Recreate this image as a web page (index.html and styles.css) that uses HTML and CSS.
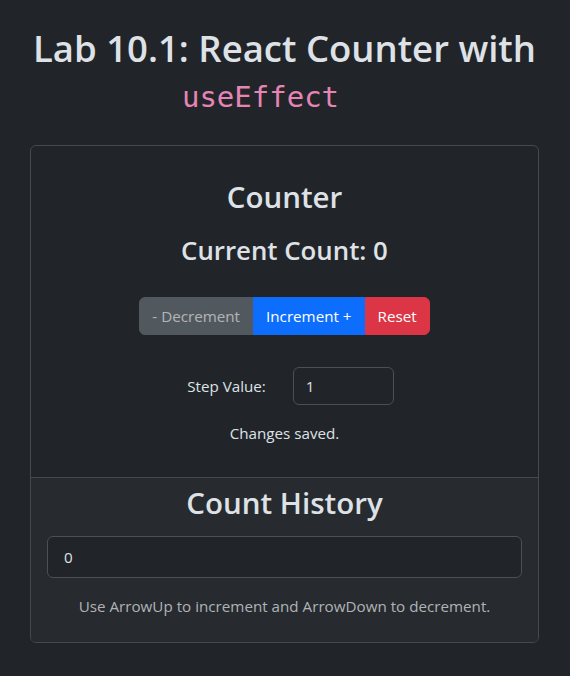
FILE: index.html
```html
<!DOCTYPE html>
<html lang="en">
<head>
<meta charset="utf-8">
<title>Lab 10.1</title>
<link rel="stylesheet" href="styles.css">
</head>
<body>
<div class="container">
  <h1 class="title">Lab 10.1: React Counter with <code class="code">useEffect</code></h1>
  <div class="card">
    <div class="card-body">
      <h2 class="heading">Counter</h2>
      <h3 class="count">Current Count: 0</h3>
      <div class="btn-group">
        <button class="btn btn-secondary" disabled>- Decrement</button>
        <button class="btn btn-primary">Increment +</button>
        <button class="btn btn-danger">Reset</button>
      </div>
      <div class="step-row">
        <label class="step-label" for="step">Step Value:</label>
        <input class="step-input" id="step" type="number" value="1">
      </div>
      <p class="saved">Changes saved.</p>
    </div>
    <div class="card-footer">
      <h2 class="heading heading-footer">Count History</h2>
      <div class="history">0</div>
      <p class="hint">Use ArrowUp to increment and ArrowDown to decrement.</p>
    </div>
  </div>
</div>
</body>
</html>
```

FILE: styles.css
```css
* { box-sizing: border-box; }
html, body { margin: 0; padding: 0; }
body {
  background: #212529;
  color: #dee2e6;
  font-family: "Open Sans", "Noto Sans", sans-serif;
  font-size: 15.2px;
  line-height: 24px;
}
.container {
  padding: 24px 31px 24px 30px;
}
.title {
  margin: 0 0 24px;
  font-size: 36.5px;
  font-weight: 600;
  line-height: 48px;
  text-align: center;
}
.code {
  display: inline-block;
  margin-right: 48px;
  font-family: "DejaVu Sans Mono", "Liberation Mono", monospace;
  font-size: 29px;
  font-weight: 400;
  line-height: 48px;
  vertical-align: top;
  padding-top: 1px;
  color: #e685b5;
}
.card {
  border: 1px solid #45494e;
  border-radius: 6px;
  overflow: hidden;
  text-align: center;
}
.card-body {
  padding: 32px 16px 16px;
}
.heading {
  margin: 0 0 17px;
  font-size: 29.5px;
  font-weight: 600;
  line-height: 38px;
}
.heading-footer {
  margin-bottom: 14px;
}
.count {
  margin: 0 0 30px;
  font-size: 25.8px;
  font-weight: 600;
  line-height: 34px;
}
.btn-group {
  display: inline-flex;
  margin-bottom: 32px;
}
.btn {
  font-family: inherit;
  font-size: 15.2px;
  line-height: 24px;
  padding: 6px 12px;
  border: 1px solid transparent;
  color: #fff;
  cursor: pointer;
}
.btn-secondary {
  background: #6c757d;
  border-color: #6c757d;
  border-radius: 6px 0 0 6px;
  opacity: 0.65;
}
.btn-primary {
  background: #0d6efd;
  border-color: #0d6efd;
}
.btn-danger {
  background: #dc3545;
  border-color: #dc3545;
  border-radius: 0 6px 6px 0;
}
.step-row {
  display: flex;
  justify-content: center;
  align-items: center;
  padding-left: 12px;
  margin-bottom: 16px;
}
.step-label {
  margin-right: 27px;
}
.step-input {
  width: 101px;
  height: 38px;
  padding: 6px 12px;
  font-family: inherit;
  font-size: 15.2px;
  color: #dee2e6;
  background: #212529;
  border: 1px solid #495057;
  border-radius: 6px;
  -moz-appearance: textfield;
}
.step-input::-webkit-inner-spin-button,
.step-input::-webkit-outer-spin-button { -webkit-appearance: none; margin: 0; }
.saved {
  margin: 0 0 16px;
}
.card-footer {
  background: #272b2f;
  border-top: 1px solid #45494e;
  padding: 6px 16px 8px;
}
.history {
  text-align: left;
  height: 42px;
  padding: 8px 16px;
  background: #212529;
  border: 1px solid #495057;
  border-radius: 6px;
}
.hint {
  margin: 16px 0 16px;
  color: #afb3b6;
}
```
